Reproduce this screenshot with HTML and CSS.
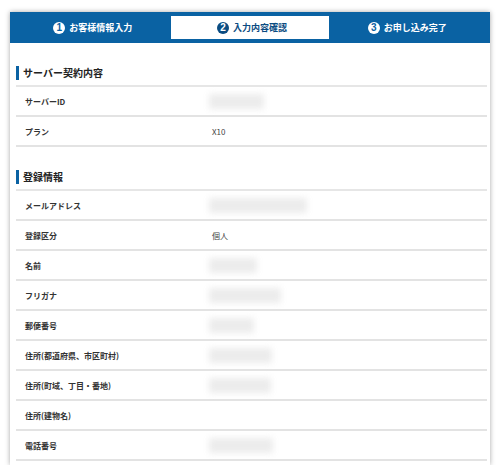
FILE: index.html
```html
<!DOCTYPE html>
<html lang="ja">
<head>
<meta charset="utf-8">
<link rel="stylesheet" href="styles.css">
</head>
<body>
<div class="card">
  <div class="steps">
    <div class="step"><span class="num">1</span><span>お客様情報入力</span></div>
    <div class="step active"><span class="num">2</span><span>入力内容確認</span></div>
    <div class="step"><span class="num">3</span><span>お申し込み完了</span></div>
  </div>
  <div class="content">
    <section class="section">
      <h2 class="heading"><span class="heading-text">サーバー契約内容</span></h2>
      <div class="row"><div class="label">サーバーID</div><div class="value"><span class="blur w55"></span></div></div>
      <div class="row"><div class="label">プラン</div><div class="value">X10</div></div>
    </section>
    <section class="section">
      <h2 class="heading"><span class="heading-text">登録情報</span></h2>
      <div class="row"><div class="label">メールアドレス</div><div class="value"><span class="blur w98"></span></div></div>
      <div class="row"><div class="label">登録区分</div><div class="value">個人</div></div>
      <div class="row"><div class="label">名前</div><div class="value"><span class="blur w48"></span></div></div>
      <div class="row"><div class="label">フリガナ</div><div class="value"><span class="blur w72"></span></div></div>
      <div class="row"><div class="label">郵便番号</div><div class="value"><span class="blur w45"></span></div></div>
      <div class="row"><div class="label">住所(都道府県、市区町村)</div><div class="value"><span class="blur w63"></span></div></div>
      <div class="row"><div class="label">住所(町域、丁目・番地)</div><div class="value"><span class="blur w62"></span></div></div>
      <div class="row"><div class="label">住所(建物名)</div><div class="value"></div></div>
      <div class="row"><div class="label">電話番号</div><div class="value"><span class="blur w64"></span></div></div>
    </section>
  </div>
</div>
</body>
</html>
```
FILE: styles.css
```css
* { box-sizing: border-box; }
html, body { margin: 0; padding: 0; background: #fff; }
body {
  font-family: "Noto Sans CJK JP", "Noto Sans", sans-serif;
  color: #333;
}
.card {
  margin: 12px 10px 0;
  width: 480px;
  height: 453px;
  background: #fff;
  box-shadow: 0 0 5px rgba(0, 0, 0, 0.35);
}
.steps {
  display: grid;
  grid-template-columns: 1fr 1fr 1fr;
  background: #0a62a3;
  padding: 4px;
  height: 31px;
}
.step {
  display: flex;
  align-items: center;
  justify-content: center;
  gap: 4px;
  color: #fff;
  font-size: 9px;
  font-weight: 700;
  line-height: 1;
}
.step .num {
  width: 12px;
  height: 12px;
  border-radius: 50%;
  background: #fff;
  color: #0a62a3;
  display: flex;
  align-items: center;
  justify-content: center;
  font-family: "Liberation Sans", sans-serif;
  font-size: 10px;
  font-weight: 700;
}
.step.active {
  background: #fff;
  color: #0b4c82;
  padding-left: 4px;
}
.step.active .num {
  background: #0b4c82;
  color: #fff;
}
.content {
  padding: 0 3px 0 6px;
}
.section {
  margin-top: 18px;
}
.heading {
  margin: 0;
  height: 26px;
  display: flex;
  align-items: center;
  border-bottom: 2px solid #e6e6e6;
  font-size: 10px;
  font-weight: 700;
  color: #222;
}
.heading-text {
  border-left: 3px solid #0a62a3;
  padding-left: 4px;
  line-height: 14px;
}
.row {
  display: grid;
  grid-template-columns: 187px 1fr;
  align-items: center;
  height: 30px;
  padding-left: 9px;
  border-bottom: 2px solid #e3e3e3;
  font-size: 8px;
}
.label {
  font-weight: 700;
  color: #333;
}
.value {
  color: #444;
  display: flex;
  align-items: center;
}
.blur {
  display: inline-block;
  height: 15px;
  background: #ececec;
  filter: blur(3px);
  margin-left: -3px;
}
.w45 { width: 45px; }
.w48 { width: 48px; }
.w55 { width: 55px; }
.w62 { width: 62px; }
.w63 { width: 63px; }
.w64 { width: 64px; }
.w72 { width: 72px; }
.w98 { width: 98px; }
```
